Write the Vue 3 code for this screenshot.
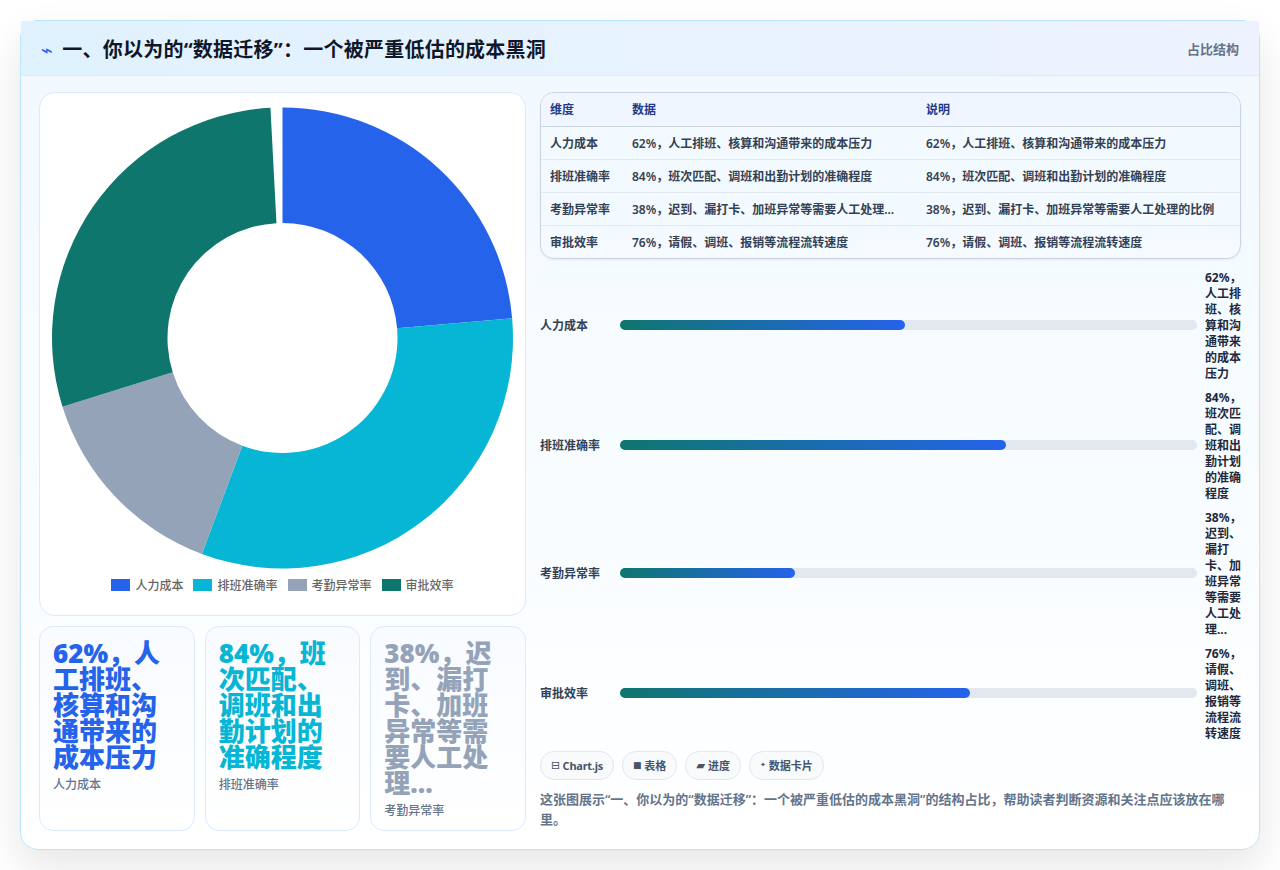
<script setup>
const slices = [
  { label: '人力成本', value: 62, color: '#2563eb', desc: '人工排班、核算和沟通带来的成本压力' },
  { label: '排班准确率', value: 84, color: '#06b6d4', desc: '班次匹配、调班和出勤计划的准确程度' },
  { label: '考勤异常率', value: 38, color: '#94a3b8', desc: '迟到、漏打卡、加班异常等需要人工处理的比例' },
  { label: '审批效率', value: 76, color: '#0f766e', desc: '请假、调班、报销等流程流转速度' }
]

const clip = (text, max) => (text.length > max ? text.slice(0, max) + '...' : text)

const rows = slices.map((s) => {
  const full = `${s.value}%，${s.desc}`
  return { ...s, full, short: clip(full, 22) }
})

const stats = rows.slice(0, 3)
const chips = [
  { icon: '⊟', size: 11, text: 'Chart.js', latin: true },
  { icon: '■', size: 9, text: '表格' },
  { icon: '▰', size: 11.5, text: '进度' },
  { icon: '✦', size: 7, text: '数据卡片' }
]

// 环形图的扇区，最后一段没有走满一圈
const cx = 243.5
const cy = 245
const outer = 230.5
const inner = 115
const sweep = 357
const total = slices.reduce((sum, s) => sum + s.value, 0)

const point = (r, deg) => {
  const a = (deg * Math.PI) / 180
  return `${(cx + r * Math.sin(a)).toFixed(2)} ${(cy - r * Math.cos(a)).toFixed(2)}`
}

let start = 0
const arcs = slices.map((s) => {
  const end = start + (s.value / total) * sweep
  const large = end - start > 180 ? 1 : 0
  const d = `M${point(outer, start)} A${outer} ${outer} 0 ${large} 1 ${point(outer, end)} L${point(inner, end)} A${inner} ${inner} 0 ${large} 0 ${point(inner, start)} Z`
  start = end
  return { d, color: s.color }
})
</script>

<template>
  <div class="page">
    <section class="panel">
      <header class="panel-head">
        <h1><span class="bolt">⌁</span>一、你以为的“数据迁移”：一个被严重低估的成本黑洞</h1>
        <span class="head-tag">占比结构</span>
      </header>
      <div class="panel-body">
        <div class="left">
          <div class="chart-card">
            <svg class="donut" width="487" height="483" viewBox="0 0 487 483">
              <path v-for="a in arcs" :key="a.color" :d="a.d" :fill="a.color" />
            </svg>
            <div class="legend">
              <span v-for="s in slices" :key="s.label" class="legend-item">
                <i class="swatch" :style="{ background: s.color }"></i>{{ s.label }}
              </span>
            </div>
          </div>
          <div class="stats">
            <div v-for="s in stats" :key="s.label" class="stat">
              <div class="stat-num" :style="{ color: s.color }">{{ s.short }}</div>
              <div class="stat-label">{{ s.label }}</div>
            </div>
          </div>
        </div>

        <div class="right">
          <div class="table-wrap">
            <table>
              <colgroup>
                <col class="col-a" />
                <col class="col-b" />
                <col />
              </colgroup>
              <thead>
                <tr>
                  <th>维度</th>
                  <th>数据</th>
                  <th>说明</th>
                </tr>
              </thead>
              <tbody>
                <tr v-for="r in rows" :key="r.label">
                  <td>{{ r.label }}</td>
                  <td>{{ r.short }}</td>
                  <td>{{ r.full }}</td>
                </tr>
              </tbody>
            </table>
          </div>

          <div class="bars">
            <div v-for="r in rows" :key="r.label" class="bar-row">
              <span class="bar-label">{{ r.label }}</span>
              <div class="track">
                <div class="fill" :style="{ width: r.value * 0.797 + '%' }"></div>
              </div>
              <span class="bar-value">{{ r.short }}</span>
            </div>
          </div>

          <div class="chips">
            <span v-for="c in chips" :key="c.text" class="chip" :class="{ latin: c.latin }"><span class="chip-icon" :style="{ fontSize: c.size + 'px' }">{{ c.icon }}</span> {{ c.text }}</span>
          </div>

          <p class="note">这张图展示“一、你以为的“数据迁移”：一个被严重低估的成本黑洞”的结构占比，帮助读者判断资源和关注点应该放在哪里。</p>
        </div>
      </div>
    </section>
  </div>
</template>

<style>
html,
body {
  margin: 0;
  background: #fff;
}
</style>

<style scoped>
.page {
  box-sizing: border-box;
  width: 1280px;
  height: 870px;
  padding: 20px;
  font-family: "Noto Sans", "Noto Sans CJK SC", sans-serif;
  overflow: hidden;
}

.panel {
  box-sizing: border-box;
  height: 830px;
  display: flex;
  flex-direction: column;
  border: 1px solid #bae6fd;
  border-radius: 18px;
  background: linear-gradient(180deg, #f0f9ff 0%, #fff 100%);
  box-shadow: 0 18px 40px rgba(15, 23, 42, 0.1);
}

.panel-head {
  height: 55px;
  flex-shrink: 0;
  box-sizing: border-box;
  display: flex;
  align-items: center;
  justify-content: space-between;
  padding: 0 20px;
  background: linear-gradient(90deg, #e0f2fe, #eef2ff);
  border-bottom: 1px solid #dbeafe;
}

h1 {
  margin: 0;
  font-size: 20px;
  font-weight: 700;
  letter-spacing: 0.012em;
  color: #0f172a;
}

.bolt {
  color: #2563eb;
  margin-right: 9px;
  font-family: "DejaVu Sans", sans-serif;
  font-size: 20px;
  font-weight: 400;
}

.head-tag {
  font-size: 13px;
  font-weight: 700;
  color: #64748b;
}

.panel-body {
  flex: 1;
  min-height: 0;
  display: grid;
  grid-template-columns: 487px 701px;
  gap: 14px;
  padding: 16px 18px 18px;
}

.left {
  display: flex;
  flex-direction: column;
  gap: 10px;
  min-width: 0;
}

.chart-card {
  box-sizing: border-box;
  height: 524px;
  border: 1px solid #dbeafe;
  border-radius: 16px;
  background: #fff;
}

.donut {
  display: block;
  margin: 0 -1px;
}

.legend {
  display: flex;
  justify-content: center;
  gap: 10px;
  font-size: 12px;
  font-weight: 500;
  color: #666;
}

.legend-item {
  display: flex;
  align-items: center;
  gap: 5px;
}

.swatch {
  width: 19px;
  height: 12px;
}

.stats {
  flex: 1;
  min-height: 0;
  display: grid;
  grid-template-columns: repeat(3, 1fr);
  gap: 10px;
}

.stat {
  box-sizing: border-box;
  padding: 13px 13px 10px;
  border: 1px solid #dbeafe;
  border-radius: 14px;
  background: linear-gradient(180deg, #f8fbff, #fff);
  min-width: 0;
}

.stat-num {
  font-size: 26px;
  font-weight: 900;
  line-height: 26px;
}

.stat-label {
  margin-top: 6px;
  font-size: 12px;
  font-weight: 500;
  line-height: 18px;
  color: #64748b;
}

.right {
  display: flex;
  flex-direction: column;
  min-width: 0;
}

.table-wrap {
  border: 1px solid #cbd5e1;
  border-radius: 14px;
  box-shadow: 0 1px 2px rgba(15, 23, 42, 0.08);
  overflow: hidden;
}

table {
  width: 100%;
  border-collapse: collapse;
  table-layout: fixed;
  font-size: 12px;
  color: #334155;
}

.col-a {
  width: 82px;
}

.col-b {
  width: 294px;
}

th {
  height: 33px;
  padding: 0 9px 1px;
  box-sizing: border-box;
  text-align: left;
  font-weight: 700;
  color: #1e3a8a;
  background: #eff6ff;
  border-bottom: 1px solid #cbd5e1;
}

td {
  height: 32px;
  padding: 0 9px;
  font-weight: 600;
  white-space: nowrap;
  border-bottom: 1px solid #e2e8f0;
}

tr:last-child td {
  border-bottom: none;
}

.bars {
  display: flex;
  flex-direction: column;
  gap: 8px;
  margin-top: 10px;
}

.bar-row {
  display: grid;
  grid-template-columns: 80px 1fr 36px;
  align-items: center;
  column-gap: 8px;
}

.bar-label {
  font-size: 12px;
  font-weight: 600;
  color: #334155;
}

.track {
  height: 10px;
  margin-left: -8px;
  border-radius: 999px;
  background: #e2e8f0;
}

.fill {
  height: 100%;
  border-radius: 999px;
  background: linear-gradient(90deg, #0f766e, #2563eb);
}

.bar-value {
  margin: 1px 0 -1px;
  font-size: 12px;
  font-weight: 700;
  line-height: 16px;
  color: #1e293b;
}

.chips {
  display: flex;
  gap: 8px;
  margin-top: 10px;
}

.chip {
  box-sizing: border-box;
  height: 29px;
  display: flex;
  align-items: center;
  padding: 0 10px;
  border: 1px solid #e2e8f0;
  border-radius: 14px;
  background: #f8fafc;
  font-size: 11px;
  font-weight: 700;
  color: #475569;
  white-space: pre;
}

.chip.latin {
  letter-spacing: -0.25px;
}

.chip-icon {
  font-family: "DejaVu Sans", sans-serif;
  font-weight: 400;
}

.note {
  margin: 9px 0 0;
  font-size: 13px;
  font-weight: 600;
  line-height: 20px;
  color: #64748b;
}
</style>
